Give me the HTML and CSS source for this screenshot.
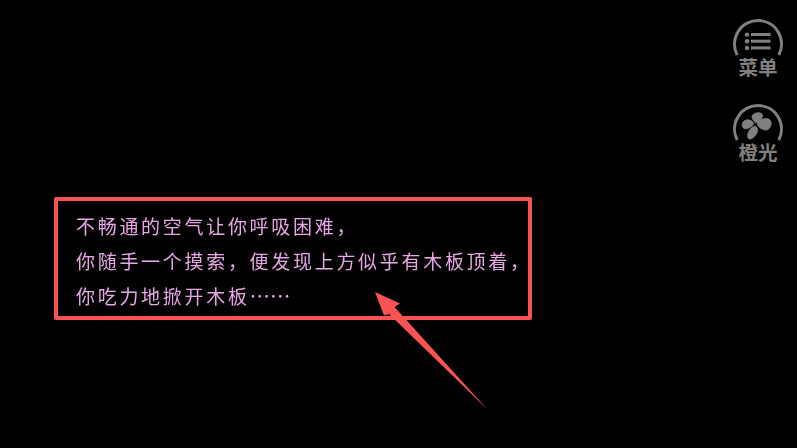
FILE: index.html
```html
<!DOCTYPE html>
<html lang="zh-CN">
<head>
<meta charset="utf-8">
<title>游戏</title>
<link rel="stylesheet" href="styles.css">
</head>
<body>
<div class="stage">
  <nav class="side">
    <div class="btn">
      <svg class="icon" viewBox="0 0 50 42">
        <path class="arc" d="M4.2 37 A23.5 23.5 0 1 1 45.8 37"/>
        <circle class="fill" cx="14" cy="16.6" r="2.2"/>
        <circle class="fill" cx="14" cy="23.2" r="2.2"/>
        <circle class="fill" cx="14" cy="29.9" r="2.2"/>
        <rect class="fill" x="18" y="15" width="19.5" height="3"/>
        <rect class="fill" x="18" y="21.7" width="19.5" height="3"/>
        <rect class="fill" x="18" y="28.4" width="19.5" height="3"/>
      </svg>
      <span class="label">菜单</span>
    </div>
    <div class="btn">
      <svg class="icon" viewBox="0 0 50 42">
        <path class="arc" d="M4.2 37 A23.5 23.5 0 1 1 45.8 37"/>
        <path class="fill petal" d="M22.8 20 C19 17 18 13 20 11.5 C23 9 28 9 29.5 11.5 C30.5 14.5 27 18 22.8 20Z"/>
        <path class="fill petal" d="M24 20.5 C26 17 30 15 34 15.5 C37.5 16 39 19 38 22 C37 25.5 35 27.5 32 27 C28 26.5 25 24 24 20.5Z"/>
        <path class="fill petal" d="M21.8 23 C24.5 24 25.5 27 24 30 C22 33.5 19 36.5 16.5 36 C14 35.5 14 31 16 28 C17.5 25.5 19.5 23.5 21.8 23Z"/>
        <path class="fill petal" d="M20.8 21 C18 25 13.5 26.5 11 25.5 C8.5 24 8.5 20 11 18 C14 15.5 20 17 20.8 21Z"/>
      </svg>
      <span class="label">橙光</span>
    </div>
  </nav>
  <section class="dialog">
    <p>不畅通的空气让你呼吸困难，</p>
    <p>你随手一个摸索，便发现上方似乎有木板顶着，</p>
    <p>你吃力地掀开木板<span class="dots">……</span></p>
  </section>
  <svg class="arrow" viewBox="0 0 797 448">
    <path d="M375 292 L400 303.5 L394.5 307 L487.5 409.5 L389 314 L384 315.5 Z"/>
  </svg>
</div>
</body>
</html>
```
FILE: styles.css
```css
html, body {
  margin: 0;
  padding: 0;
  background: #000;
}
.stage {
  position: relative;
  width: 797px;
  height: 448px;
  background: #000;
  overflow: hidden;
}
.side {
  position: absolute;
  top: 18px;
  right: 14px;
  display: flex;
  flex-direction: column;
  gap: 27px;
  align-items: center;
}
.btn {
  display: flex;
  flex-direction: column;
  align-items: center;
  width: 50px;
}
.icon {
  display: block;
  width: 50px;
  height: 42px;
}
.arc {
  fill: none;
  stroke: #808080;
  stroke-width: 3;
}
.fill {
  fill: #808080;
}
.petal {
  stroke: #808080;
  stroke-width: 0.7;
}
.label {
  display: block;
  margin-top: -3px;
  font-family: "Noto Sans CJK SC", sans-serif;
  font-weight: 700;
  font-size: 19.5px;
  line-height: 19px;
  color: #808080;
}
.dialog {
  position: absolute;
  left: 54px;
  top: 197px;
  width: 478px;
  height: 123px;
  box-sizing: border-box;
  border: 4px solid #fb5353;
  border-radius: 2px;
  padding: 7px 0 0 18px;
}
.dialog p {
  margin: 0;
  height: 35px;
  font-family: "Noto Sans CJK SC", sans-serif;
  font-weight: 400;
  font-size: 19px;
  letter-spacing: 2.7px;
  line-height: 35px;
  color: #e9a6e6;
  white-space: nowrap;
  will-change: transform;
}
.dots {
  font-size: 20.5px;
  letter-spacing: 0;
  line-height: 1;
}
.arrow {
  position: absolute;
  left: 0;
  top: 0;
  width: 797px;
  height: 448px;
}
.arrow path {
  fill: #fb5353;
}
```
